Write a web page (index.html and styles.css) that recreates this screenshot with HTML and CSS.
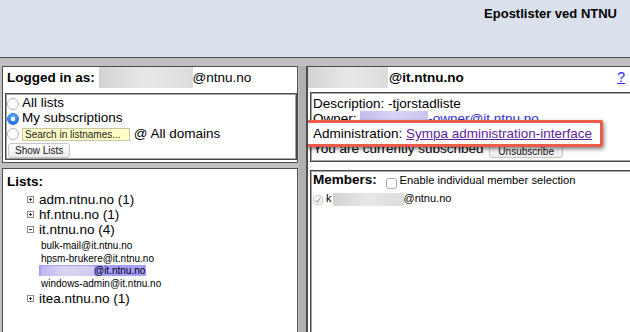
FILE: index.html
```html
<!doctype html>
<html lang="no">
  <head>
    <meta charset="UTF-8" />
    <title>Epostlister ved NTNU</title>
    <link rel="stylesheet" href="styles.css">
  </head>
  <body>
    <div class="banner">
      <h1>Epostlister ved NTNU</h1>
    </div>

    <div class="frames">
      <div class="left-col">
        <div class="frame login-frame">
          <div class="login-line">
            <b>Logged in as:</b> <span class="blur login-blur"></span>@ntnu.no
          </div>
          <div class="filter-box">
            <div class="opt"><span class="radio"></span>All lists</div>
            <div class="opt"><span class="radio checked"></span>My subscriptions</div>
            <div class="opt search-row">
              <span class="radio"></span><input class="search" type="text" placeholder="Search in listnames..."> @ All domains
            </div>
            <div class="opt"><button class="btn show-btn">Show Lists</button></div>
          </div>
        </div>

        <div class="frame lists-frame">
          <div class="frame-head">Lists:</div>
          <ul class="tree">
            <li><span class="toggle plus"></span>adm.ntnu.no (1)</li>
            <li><span class="toggle plus"></span>hf.ntnu.no (1)</li>
            <li>
              <span class="toggle minus"></span>it.ntnu.no (4)
              <ul class="sublists">
                <li>bulk-mail@it.ntnu.no</li>
                <li>hpsm-brukere@it.ntnu.no</li>
                <li><span class="picked"><span class="blur list-blur"></span>@it.ntnu.no</span></li>
                <li>windows-admin@it.ntnu.no</li>
              </ul>
            </li>
            <li><span class="toggle plus"></span>itea.ntnu.no (1)</li>
          </ul>
        </div>
      </div>

      <div class="splitter"></div>

      <div class="frame detail-frame">
        <div class="title-line">
          <span><span class="blur title-blur"></span>@it.ntnu.no</span>
          <a class="help" href="#">?</a>
        </div>

        <div class="info-box">
          <div>Description: -tjorstadliste</div>
          <div>Owner: <span class="blur owner-blur"></span><a class="owner-link" href="#">-owner@it.ntnu.no</a></div>
          <div class="admin-row">Administration: <a class="visited" href="#">Sympa administration-interface</a></div>
          <div>You are currently subscribed <button class="btn unsub-btn">Unsubscribe</button></div>
        </div>

        <div class="members-box">
          <div class="members-head">
            <b>Members:</b> <span class="check"></span><span class="enable-text">Enable individual member selection</span>
          </div>
          <div class="member-row">
            <span class="check ticked">
              <svg width="8" height="8" viewBox="0 0 8 8"><polyline points="1.5,4.5 3.2,6.2 6.5,1.8" fill="none" stroke="#a8a8a8" stroke-width="1.2"/></svg>
            </span>k<span class="blur member-blur"></span>@ntnu.no
          </div>
        </div>
      </div>
    </div>
  </body>
</html>
```

FILE: styles.css
```css
html,
body {
  margin: 0;
  height: 332px;
  overflow: hidden;
}
body {
  font-family: "Liberation Sans", Arial, sans-serif;
  font-size: 13.5px;
  background: #c0c0c0;
  color: #000;
}
.banner {
  height: 57px;
  background: #dbe1ec;
  border-bottom: 1px solid #4f4f4f;
}
.banner h1 {
  margin: 0;
  padding: 6px 13px 0 0;
  font-size: 13px;
  line-height: 16px;
  text-align: right;
}
.frames {
  display: grid;
  grid-template-columns: 296px 8px 1fr;
  height: 266px;
  padding: 8px 0 0 2px;
}
.left-col {
  display: flex;
  flex-direction: column;
  gap: 5px;
  min-height: 0;
}
.frame {
  background: #fff;
  border: 1px solid #4d4d4d;
}
.login-frame {
  height: 97px;
  box-sizing: border-box;
}
.lists-frame {
  flex: 1;
  border-bottom: none;
}
.splitter {
  background: #b0b0b0;
  margin-left: 1px;
}
.detail-frame {
  border-left-width: 2px;
  border-right: none;
  border-bottom: none;
  overflow: hidden;
  min-height: 0;
}
.blur {
  display: inline-block;
  vertical-align: top;
  height: 21px;
  background: linear-gradient(90deg, #d3d3d3, #e8e8e8 50%, #dcdcdc);
}
.login-line {
  height: 21px;
  line-height: 21px;
  padding-left: 4px;
  white-space: nowrap;
}
.login-blur {
  width: 94px;
}
.filter-box {
  margin: 5px 0 0 2px;
  height: 67px;
  box-sizing: border-box;
  border: 1px solid #4a4a4a;
  box-shadow: inset 0 0 0 1px #a5a5a5;
  padding: 1px 0 0 1px;
}
.opt {
  line-height: 15px;
  white-space: nowrap;
}
.search-row {
  line-height: 17px;
}
.radio {
  display: inline-block;
  width: 12px;
  height: 12px;
  box-sizing: border-box;
  border-radius: 50%;
  border: 1px solid #b4b4b4;
  background: #fff;
  vertical-align: -3px;
  margin-right: 3px;
}
.radio.checked {
  border-color: #2c6fd1;
  background: radial-gradient(circle, #fff 0 2px, transparent 2.6px),
    linear-gradient(#5aa9fc, #1f6fe0);
}
.search-row .radio {
  vertical-align: top;
  margin-top: 3px;
}
.search {
  vertical-align: top;
  margin: 3px 0 0;
  width: 108px;
  height: 13px;
  box-sizing: border-box;
  border: 1px solid #c8c8a8;
  background: #ffffc6;
  font: 10px "Liberation Sans", Arial, sans-serif;
  padding: 0 2px;
}
.search::placeholder {
  color: #222;
}
.btn {
  font: 10px "Liberation Sans", Arial, sans-serif;
  color: #111;
  border: 1px solid #c6c6c6;
  border-radius: 3px;
  background: linear-gradient(#fff, #ececec);
  padding: 0 6px;
  vertical-align: top;
}
.show-btn {
  height: 15px;
  margin: 1px 0 0 1px;
}
.unsub-btn {
  height: 13px;
  line-height: 11px;
  padding: 0 8px;
  margin: 4px 0 0 2px;
}
.frame-head {
  font-weight: bold;
  line-height: 19px;
  padding: 3px 0 0 4px;
}
.tree {
  list-style: none;
  margin: 0;
  padding: 1px 0 0 24px;
  line-height: 15px;
}
.toggle {
  display: inline-block;
  width: 7px;
  height: 7px;
  box-sizing: border-box;
  border: 1px solid #8c8c8c;
  margin: 0 5px 1px 0;
}
.toggle.plus {
  background: linear-gradient(#333, #333) center / 3px 1px no-repeat,
    linear-gradient(#333, #333) center / 1px 3px no-repeat;
}
.toggle.minus {
  background: linear-gradient(#333, #333) center / 3px 1px no-repeat;
}
.sublists {
  list-style: none;
  margin: 0;
  padding: 3px 0 0 14px;
  font-size: 10px;
  line-height: 12.7px;
}
.picked {
  background: #a59dff;
  margin-left: -2px;
  padding: 0 1px 0 2px;
}
.list-blur {
  width: 53px;
  height: 10px;
  vertical-align: -2px;
  background: linear-gradient(90deg, #bdb7f2, #d8d5ef 45%, #cfcaf3);
}
.title-line {
  display: flex;
  justify-content: space-between;
  height: 21px;
  line-height: 21px;
  font-weight: bold;
  white-space: nowrap;
}
.title-blur {
  width: 80px;
  margin-right: 1px;
}
.help {
  font-weight: normal;
  font-size: 14px;
  color: #2a2aff;
  margin-right: 5px;
}
.info-box {
  margin: 4px -20px 0 2px;
  border: 1px solid #4a4a4a;
  box-shadow: inset 0 0 0 1px #a5a5a5;
  padding: 3px 0 3px 2px;
  line-height: 15px;
  white-space: nowrap;
}
.owner-blur {
  width: 68px;
  height: 15px;
  vertical-align: -3px;
  background: linear-gradient(90deg, #c4bcef, #d9d4f6 50%, #cbc4f2);
}
.owner-link {
  color: #3030d6;
}
.visited {
  color: #5b1e9c;
}
.admin-row {
  position: relative;
  z-index: 0;
}
.admin-row::before {
  content: "";
  position: absolute;
  z-index: -1;
  left: -8px;
  top: -6px;
  width: 298px;
  height: 27px;
  box-sizing: border-box;
  border: 3px solid #ef5b49;
  border-radius: 2px;
  background: #fff;
  box-shadow: 1px 2px 4px rgba(0, 0, 0, 0.5);
}
.members-box {
  margin: 8px -20px 0 2px;
  height: 200px;
  border: 1px solid #4a4a4a;
  box-shadow: inset 0 0 0 1px #a5a5a5;
  padding: 1px 0 0 2px;
  white-space: nowrap;
}
.members-head {
  line-height: 15px;
}
.check {
  display: inline-block;
  width: 11px;
  height: 11px;
  box-sizing: border-box;
  border: 1px solid #a9a9a9;
  border-radius: 3px;
  background: #fff;
  vertical-align: -5px;
  margin: 0 3px 0 5px;
  overflow: hidden;
}
.enable-text {
  font-size: 11.2px;
}
.member-row {
  margin-top: 1px;
  font-size: 11px;
  line-height: 16px;
}
.check.ticked {
  width: 10px;
  height: 10px;
  margin: 0 3px 0 0;
  vertical-align: -3px;
  border-color: #d2d2d2;
  background: #f6f6f6;
}
.check.ticked svg {
  display: block;
}
.member-blur {
  width: 71px;
  height: 13px;
  vertical-align: -4px;
  margin-left: 1px;
}
```
